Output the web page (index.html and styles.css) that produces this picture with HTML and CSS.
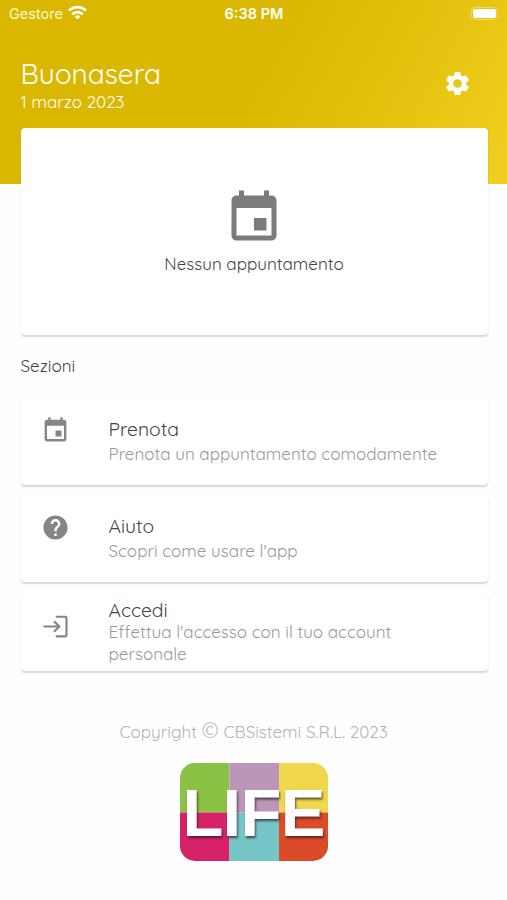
FILE: index.html
```html
<!DOCTYPE html>
<html lang="it">
<head>
    <meta charset="UTF-8">
    <meta name="viewport" content="width=device-width, initial-scale=1.0">
    <title>Buonasera</title>
    <link rel="stylesheet" href="styles.css">
</head>
<body>
    <header class="header">
        <div class="status-bar">
            <div class="carrier">
                <span>Gestore</span>
                <svg class="wifi" viewBox="0 0 18 14" fill="none" stroke="#fff" stroke-width="2.5">
                    <path d="M.9 5.2a11.6 11.6 0 0 1 16.2 0"/>
                    <path d="M4 8.6a7.2 7.2 0 0 1 10 0"/>
                    <path d="M6.3 10.9a3.9 3.9 0 0 1 5.4 0L9 13.7z" fill="#fff" stroke="none"/>
                </svg>
            </div>
            <span class="time">6:38 PM</span>
            <div class="battery"><span></span></div>
        </div>
        <div class="greeting">
            <div>
                <h1>Buonasera</h1>
                <p class="date">1 marzo 2023</p>
            </div>
            <svg class="gear" viewBox="0 0 24 24" fill="#fff"><path d="M19.14 12.94c.04-.3.06-.61.06-.94 0-.32-.02-.64-.07-.94l2.03-1.58a.49.49 0 0 0 .12-.61l-1.92-3.32a.488.488 0 0 0-.59-.22l-2.39.96c-.5-.38-1.03-.7-1.62-.94l-.36-2.54a.484.484 0 0 0-.48-.41h-3.84c-.24 0-.43.17-.47.41l-.36 2.54c-.59.24-1.13.57-1.62.94l-2.39-.96c-.22-.08-.47 0-.59.22L2.74 8.87c-.12.21-.08.47.12.61l2.03 1.58c-.05.3-.09.63-.09.94s.02.64.07.94l-2.03 1.58a.49.49 0 0 0-.12.61l1.92 3.32c.12.22.37.29.59.22l2.39-.96c.5.38 1.03.7 1.62.94l.36 2.54c.05.24.24.41.48.41h3.84c.24 0 .44-.17.47-.41l.36-2.54c.59-.24 1.13-.56 1.62-.94l2.39.96c.22.08.47 0 .59-.22l1.92-3.32c.12-.22.07-.47-.12-.61l-2.01-1.58zM12 15.6A3.6 3.6 0 0 1 8.4 12c0-1.98 1.62-3.6 3.6-3.6s3.6 1.62 3.6 3.6-1.62 3.6-3.6 3.6z"/></svg>
        </div>
    </header>

    <main>
        <section class="card appointment">
            <svg viewBox="0 0 24 24" fill="#7b7b7b"><path d="M17 12h-5v5h5v-5zM16 1v2H8V1H6v2H5c-1.11 0-1.99.9-1.99 2L3 19c0 1.1.89 2 2 2h14c1.1 0 2-.9 2-2V5c0-1.1-.9-2-2-2h-1V1h-2zm3 18H5V8h14v11z"/></svg>
            <p>Nessun appuntamento</p>
        </section>

        <h2>Sezioni</h2>

        <a class="card item">
            <svg viewBox="0 0 24 24" fill="#858585"><path d="M17 12h-5v5h5v-5zM16 1v2H8V1H6v2H5c-1.11 0-1.99.9-1.99 2L3 19c0 1.1.89 2 2 2h14c1.1 0 2-.9 2-2V5c0-1.1-.9-2-2-2h-1V1h-2zm3 18H5V8h14v11z"/></svg>
            <div>
                <h3>Prenota</h3>
                <p>Prenota un appuntamento comodamente</p>
            </div>
        </a>
        <a class="card item">
            <svg viewBox="0 0 24 24" fill="#858585"><path d="M12 2C6.48 2 2 6.48 2 12s4.48 10 10 10 10-4.48 10-10S17.52 2 12 2zm1 17h-2v-2h2v2zm2.07-7.75l-.9.92C13.45 12.9 13 13.5 13 15h-2v-.5c0-1.1.45-2.1 1.17-2.83l1.24-1.26c.37-.36.59-.86.59-1.41 0-1.1-.9-2-2-2s-2 .9-2 2H8c0-2.21 1.79-4 4-4s4 1.79 4 4c0 .88-.36 1.68-.93 2.25z"/></svg>
            <div>
                <h3>Aiuto</h3>
                <p>Scopri come usare l'app</p>
            </div>
        </a>
        <a class="card item item-login">
            <svg viewBox="0 0 24 24" fill="none" stroke="#858585" stroke-width="1.8"><path d="M12.2 3.9h7.9a1 1 0 0 1 1 1v14.2a1 1 0 0 1-1 1h-7.9M2 12h13M10.8 7.6l4.4 4.4-4.4 4.4"/></svg>
            <div>
                <h3>Accedi</h3>
                <p>Effettua l'accesso con il tuo account personale</p>
            </div>
        </a>
    </main>

    <footer>
        <p>Copyright <span class="copy">©</span> CBSistemi S.R.L. 2023</p>
        <svg class="logo" viewBox="0 0 148 98">
            <clipPath id="round"><rect width="148" height="98" rx="15"/></clipPath>
            <g clip-path="url(#round)">
                <rect width="49.5" height="49.5" fill="#8bc144"/>
                <rect x="49.5" width="49.5" height="49.5" fill="#bc96b9"/>
                <rect x="99" width="49" height="49.5" fill="#f0d74b"/>
                <rect y="49.5" width="49.5" height="49" fill="#d52269"/>
                <rect x="49.5" y="49.5" width="49.5" height="49" fill="#74c5c8"/>
                <rect x="99" y="49.5" width="49" height="49" fill="#dc4b27"/>
            </g>
            <text class="logo-text" x="2.5 42.5 60.5 100.8" y="73">LIFE</text>
        </svg>
    </footer>
</body>
</html>
```
FILE: styles.css
```css
* { box-sizing: border-box; }
body { margin: 0; height: 900px; overflow: hidden; background: #fefefe; font-family: Quicksand, Lato, sans-serif; color: #444; }
h1, h2, h3, p { margin: 0; font-weight: 400; white-space: nowrap; }

.header { height: 184px; color: #fff; background: linear-gradient(120deg, #dab700 0%, #dab700 50%, #f0cf20 100%); }
.status-bar { display: grid; grid-template-columns: 1fr auto 1fr; align-items: center; height: 27px; padding: 0 8px 0 9px; font-family: Inter, sans-serif; font-size: 14.5px; }
.carrier { display: flex; align-items: center; gap: 5px; color: #fff8d8; }
.wifi { width: 19px; height: 15px; margin-top: -2px; }
.time { font-weight: 600; }
.battery { justify-self: end; width: 27px; height: 13px; padding: 1px; margin-right: 1px; border: 1px solid #efd972; border-radius: 4px; }
.battery span { display: block; height: 100%; background: #fff; border-radius: 2px; }
.greeting { display: flex; justify-content: space-between; padding: 30px 35px 0 20.5px; }
.greeting h1 { font-size: 28px; line-height: 34px; }
.date { font-size: 17px; line-height: 22px; }
.gear { width: 29px; height: 29px; margin-top: 12px; }

main { padding: 0 19.5px 0 20.5px; margin-top: -56px; }
.card { display: flex; background: #fff; border-radius: 4px; box-shadow: 0 1.5px 1.5px rgba(0, 0, 0, .15), 0 0 1px rgba(0, 0, 0, .04); }
.appointment { flex-direction: column; align-items: center; height: 207px; padding-top: 60px; }
.appointment svg { width: 60px; height: 60px; }
.appointment p { margin-top: 5px; font-size: 17px; line-height: 22px; }
h2 { margin: 20px 0 21px; font-size: 17px; line-height: 22px; }

.item { height: 87px; margin-bottom: 10.4px; padding: 18px 20px 0; gap: 39px; }
.item svg { flex: none; width: 29px; height: 29px; }
.item h3 { font-size: 19.3px; line-height: 26px; margin-bottom: 1px; }
.item p { font-size: 17px; line-height: 22px; color: #999; }
.item-login { height: 78px; padding-top: 6px; }
.item-login svg { margin-top: 13px; }
.item-login h3 { line-height: 22px; margin-bottom: .7px; }
.item-login p { width: 320px; white-space: normal; }

footer { display: flex; flex-direction: column; align-items: center; padding-top: 38px; }
footer p { height: 22px; font-size: 17px; line-height: 22px; color: #b3b3b3; }
.copy { font-family: "Noto Sans CJK SC", sans-serif; font-size: 21px; font-weight: 300; line-height: 1; }
.logo { width: 148px; height: 98px; margin-top: 21.5px; }
.logo-text { font: bold 67px "Liberation Sans", sans-serif; fill: #fff; filter: drop-shadow(1.5px 2px 1px rgba(40, 20, 30, .7)); }
```
